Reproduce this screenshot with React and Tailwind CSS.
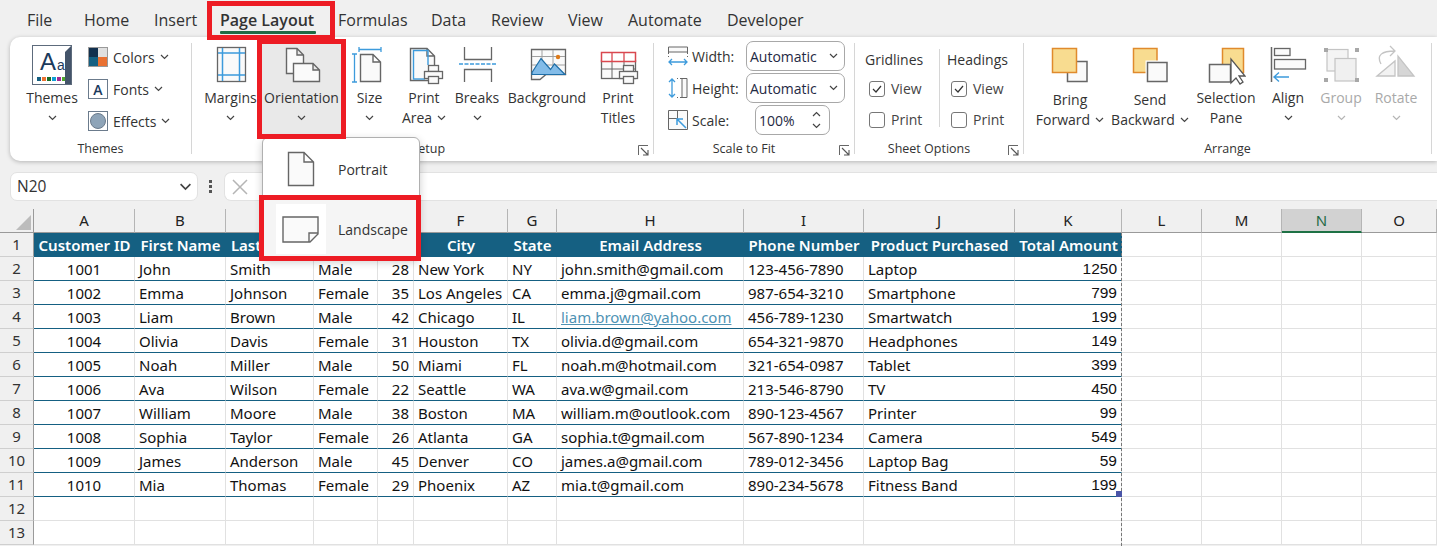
import React from 'react';

const UI = { fontFamily: '"Open Sans", "Noto Sans", sans-serif' };

const Chev = ({ c = '#444', className = '' }) => (
  <svg width="9" height="6" viewBox="0 0 9 6" className={className}>
    <path d="M1 1l3.5 3.5L8 1" fill="none" stroke={c} strokeWidth="1.2" />
  </svg>
);

const Launcher = () => (
  <svg width="11" height="11" viewBox="0 0 11 11" className="shrink-0">
    <path d="M.5 10V.5H10" fill="none" stroke="#666" />
    <path d="M3 3l6.5 6.5M5 10h5V5" fill="none" stroke="#555" strokeWidth="1.1" />
  </svg>
);

const G = '#666';
const B = '#3d9bdc';

const Page = ({ x, y, w, h, f = 6, c = G }) => (
  <path
    d={`M${x + .5} ${y + .5}H${x + w - f}L${x + w - .5} ${y + f}V${y + h - .5}H${x + .5}ZM${x + w - f} ${y + .5}V${y + f}H${x + w - .5}`}
    fill="#fafafa"
    stroke={c}
    strokeWidth="1.4"
    strokeLinejoin="miter"
  />
);

const Printer = ({ x, y }) => (
  <g fill="#fafafa" stroke={G} strokeWidth="1.3">
    <rect x={x + 4.5} y={y + .5} width="10" height="6" />
    <rect x={x + .5} y={y + 6.5} width="18" height="7" />
    <rect x={x + 4.5} y={y + 11.5} width="10" height="7" />
  </g>
);

const Icons = {
  margins: (
    <svg width="40" height="40" viewBox="0 0 40 40">
      <rect x="6.500" y="2.500" width="28" height="34" fill="#fafafa" stroke={G} strokeWidth="1.3" />
      <path d="M11.500 3v33M28.500 3v33M7 8h27M7 30h27" stroke={B} strokeWidth="1.5" />
    </svg>
  ),
  orientation: (
    <svg width="40" height="40" viewBox="0 0 40 40">
      <Page x={4} y={3} w={18} h={26} f={7} />
      <Page x={11} y={18} w={27} h={19} f={7} />
    </svg>
  ),
  size: (
    <svg width="40" height="40" viewBox="0 0 40 40">
      <path d="M9 4.500h22M9 2v5M31 2v5M4.500 9v28M2 9h5M2 37h5" stroke={B} strokeWidth="1.3" fill="none" />
      <Page x={10} y={9} w={21} h={28} f={8} />
    </svg>
  ),
  printArea: (
    <svg width="40" height="40" viewBox="0 0 40 40">
      <Page x={6} y={3} w={25} h={33} f={8} />
      <path d="M9.500 34V5.500H24V20" fill="none" stroke={B} strokeWidth="1.4" />
      <path d="M9 34h12" stroke={B} strokeWidth="1.4" />
      <Printer x={20} y={20} />
    </svg>
  ),
  breaks: (
    <svg width="40" height="40" viewBox="0 0 40 40">
      <path d="M7.500 2v12.500h27V2M7.500 37V24.500h27V37" fill="none" stroke={G} strokeWidth="1.3" />
      <path d="M2 19h37" stroke={B} strokeWidth="1.4" strokeDasharray="4 1.500" />
    </svg>
  ),
  background: (
    <svg width="40" height="40" viewBox="0 0 40 40">
      <path d="M4.500 4.500h34v25H19l-6 5H4.500z" fill="#fafafa" stroke={G} strokeWidth="1.300" />
      <path d="M5 11.500h33M15 5v24M26 5v24M5 20h33" stroke="#a0a0a0" />
      <path d="M5 27.500l9-14 9.500 11 4-5.500 10.500 10.500H5z" fill="#83bce8" stroke="#1f6fa8" strokeWidth="1.2" />
      <circle cx="31" cy="12" r="2.200" fill="#dd7a1a" />
    </svg>
  ),
  printTitles: (
    <svg width="44" height="40" viewBox="0 0 44 40">
      <rect x="5.500" y="15.500" width="34" height="18" fill="#fafafa" stroke={G} strokeWidth="1.3" />
      <path d="M16 16v18M28 16v18M6 24h33" stroke={G} />
      <rect x="5.500" y="7.500" width="34" height="9" fill="#fff" stroke="#d9484f" strokeWidth="1.500" />
      <path d="M16 8v8M28 8v8" stroke="#d9484f" strokeWidth="1.300" />
      <Printer x={23} y={20} />
    </svg>
  ),
  bring: (
    <svg width="40" height="40" viewBox="0 0 40 40">
      <rect x="17.500" y="16.500" width="19.500" height="20" fill="#fafafa" stroke={G} strokeWidth="1.500" />
      <rect x="2.500" y="3.500" width="24" height="24" fill="#f8dc90" stroke="#e08a2c" strokeWidth="1.500" />
    </svg>
  ),
  send: (
    <svg width="40" height="40" viewBox="0 0 40 40">
      <rect x="3.500" y="3.500" width="23.500" height="24" fill="#f8dc90" stroke="#e08a2c" strokeWidth="1.500" />
      <rect x="17.500" y="17.500" width="19.500" height="19" fill="#fafafa" stroke="#fff" strokeWidth="4" />
      <rect x="17.500" y="17.500" width="19.500" height="19" fill="#fafafa" stroke={G} strokeWidth="1.500" />
    </svg>
  ),
  selection: (
    <svg width="40" height="40" viewBox="0 0 40 40">
      <rect x="16.500" y="3.500" width="21" height="24" fill="#f8dc90" stroke="#e08a2c" strokeWidth="1.500" />
      <rect x="3.500" y="19.500" width="21" height="17.500" fill="#fafafa" stroke={G} strokeWidth="1.500" />
      <path d="M25 14v24l5-5 4 6 3-2-4-6h6z" fill="#fff" stroke="#555" strokeWidth="1.300" />
    </svg>
  ),
  align: (
    <svg width="40" height="40" viewBox="0 0 40 40">
      <path d="M3.500 2v35" stroke={G} strokeWidth="1.500" />
      <rect x="6.500" y="3.500" width="15.500" height="7" fill="#fafafa" stroke={G} strokeWidth="1.300" />
      <rect x="6.500" y="14.500" width="31" height="9.500" fill="#fafafa" stroke={G} strokeWidth="1.300" />
      <path d="M6 32h15M11 27.500L6 32l5 4.500" fill="none" stroke={B} strokeWidth="1.400" />
    </svg>
  ),
  group: (
    <svg width="40" height="40" viewBox="0 0 40 40">
      <rect x="6" y="4.500" width="21" height="21.500" fill="#f4f4f4" stroke="#c4c4c4" strokeWidth="1.200" />
      <rect x="14" y="13.500" width="21" height="22.500" fill="#f0f0f0" stroke="#c4c4c4" strokeWidth="1.200" />
      <path d="M3 3h4v4H3zM34 3h4v4h-4zM3 33h4v4H3zM34 33h4v4h-4z" fill="#a8a8a8" />
    </svg>
  ),
  rotate: (
    <svg width="44" height="40" viewBox="0 0 44 40">
      <path d="M7 19C2 10 8 6 21 6M16 1l5 5-5 5" fill="none" stroke="#c4c4c4" strokeWidth="1.300" />
      <path d="M3 31l18-15v15z" fill="#f2f2f2" stroke="#c4c4c4" strokeWidth="1.300" />
      <path d="M24 31V11l16 20z" fill="#d6d6d6" stroke="#c4c4c4" strokeWidth="1.300" />
    </svg>
  ),
};

const Big = ({ w, icon, l1, l2, chev, dim, hot, top = 'mt-[3px]' }) => (
  <div className={`flex h-[96px] shrink-0 flex-col items-center text-[14px] leading-[20px] ${w} ${hot ? 'bg-[#e9e9e9]' : ''} ${dim ? 'text-[#a9a9a9]' : 'text-[#333]'}`}>
    <div className="mt-[5px] flex h-[40px] items-center justify-center">{icon}</div>
    <div className={`${top} whitespace-nowrap`}>{l1}</div>
    {l2 ? (
      <div className="flex items-center gap-[5px] whitespace-nowrap">
        {l2}
        {chev && <Chev />}
      </div>
    ) : (
      <div className="flex h-[20px] items-center"><Chev c={dim ? '#b5b5b5' : '#444'} /></div>
    )}
  </div>
);

const SmallRow = ({ icon, label }) => (
  <div className="flex h-[32px] items-center gap-[5px] text-[14px] text-[#333]">
    {icon}
    <span>{label}</span>
    <Chev />
  </div>
);

const Sep = () => <div className="mt-[6px] h-[111px] w-px shrink-0 bg-[#d6d6d6]" />;

const GroupLabel = ({ children, launcher }) => (
  <div className={`relative flex h-[20px] items-center justify-center text-[12.500px] text-[#333] ${launcher ? 'pr-[20px]' : ''}`}>
    {children}
    {launcher && <span className="absolute right-[4px] top-[6px] flex"><Launcher /></span>}
  </div>
);

const Select = ({ w = 'w-[99px]', children }) => (
  <div className={`flex h-[30px] items-center justify-between rounded-[7px] border border-[#a8a8a8] pl-[3px] pr-[6px] text-[14px] text-[#1f2a44] ${w}`}>
    {children}
  </div>
);

const Check = ({ on, label }) => (
  <div className="flex h-[31px] items-center gap-[6px] pl-[4px] text-[14px] text-[#444]">
    <span className="flex h-[16px] w-[16px] items-center justify-center rounded-[3px] border border-[#777]">
      {on && (
        <svg width="10" height="8" viewBox="0 0 10 8"><path d="M1 4l3 3 5-6" fill="none" stroke="#333" strokeWidth="1.200" /></svg>
      )}
    </span>
    {label}
  </div>
);

function Ribbon() {
  return (
    <div className="ml-[10px] flex h-[124px] items-start rounded-l-[10px] bg-white shadow-[0_1px_4px_rgba(0,0,0,0.25)]" style={UI}>
      {/* Themes */}
      <div className="flex w-[181px] shrink-0 flex-col">
        <div className="flex h-[102px] pt-[8px]">
          <div className="flex w-[84px] flex-col items-center text-[14px] leading-[20px] text-[#333]">
            <div className="relative h-[40px] w-[40px] border border-[#5d6b7c] p-[1px]">
              <div className="flex h-full w-full flex-col bg-white pl-[3px]">
                <div className="flex h-[28px] items-end pl-[3px] text-[#1b3a5c]" style={{ fontFamily: '"Liberation Sans", sans-serif' }}>
                  <span className="text-[24px] leading-[26px]">A</span>
                  <span className="ml-[1px] text-[14px] leading-[20px]">a</span>
                </div>
                <div className="mt-[2px] flex gap-[1px]">
                  {['#156082', '#e97132', '#196b24', '#0f9ed5', '#a02b93', '#4ea72e'].map((c) => (
                    <span key={c} className="h-[4px] w-[4px]" style={{ background: c }} />
                  ))}
                </div>
              </div>
              <div className="absolute right-0 top-0 h-full w-[6px] bg-[#44546a]" />
              <div className="absolute right-0 top-0 h-0 w-0 border-b-[6px] border-l-[6px] border-b-transparent border-l-white" />
            </div>
            <div className="mt-[3px]">Themes</div>
            <div className="flex h-[20px] items-center"><Chev /></div>
          </div>
          <div className="-ml-[6px] -mt-[4px] flex flex-col">
            <SmallRow
              label="Colors"
              icon={
                <span className="grid h-[20px] w-[20px] grid-cols-2 border border-[#999]">
                  <span className="bg-[#12304e]" /><span className="bg-[#e0e0e0]" />
                  <span className="bg-[#156082]" /><span className="bg-[#e97132]" />
                </span>
              }
            />
            <SmallRow
              label="Fonts"
              icon={
                <span className="flex h-[20px] w-[20px] items-center justify-center border border-[#6b7b8c] text-[14px] font-semibold text-[#1b3a5c]">A</span>
              }
            />
            <SmallRow
              label="Effects"
              icon={
                <span className="flex h-[20px] w-[20px] items-center justify-center border border-[#6b7b8c]">
                  <span className="h-[16px] w-[16px] rounded-full border border-[#6b7b8c] bg-[#8ea4b8]" />
                </span>
              }
            />
          </div>
        </div>
        <GroupLabel>Themes</GroupLabel>
      </div>
      <Sep />
      {/* Page Setup */}
      <div className="flex w-[461px] shrink-0 flex-col">
        <div className="flex h-[102px] pl-[8px] pt-[3px]">
          <Big w="w-[61px]" icon={Icons.margins} l1="Margins" />
          <Big w="w-[81px]" icon={Icons.orientation} l1="Orientation" hot />
          <Big w="w-[55px]" icon={Icons.size} l1="Size" />
          <Big w="w-[54px]" icon={Icons.printArea} l1="Print" l2="Area" chev />
          <Big w="w-[52px]" icon={Icons.breaks} l1="Breaks" />
          <Big w="w-[88px]" icon={Icons.background} l1="Background" l2=" " />
          <Big w="w-[54px]" icon={Icons.printTitles} l1="Print" l2="Titles" />
        </div>
        <GroupLabel launcher>Page Setup</GroupLabel>
      </div>
      <Sep />
      {/* Scale to Fit */}
      <div className="flex w-[200px] shrink-0 flex-col">
        <div className="flex h-[102px] flex-col gap-[2px] pl-[14px] pt-[4px]">
          <div className="flex items-center gap-[4px] text-[14px] text-[#333]">
            <svg width="20" height="20" viewBox="0 0 20 20">
              <path d="M.5 1h19v5H.5z" fill="#fafafa" stroke={G} />
              <path d="M.5 6v5M19.500 6v5" stroke={G} strokeDasharray="2 2" />
              <path d="M1 16h18M4 13l-3 3 3 3M16 13l3 3-3 3" fill="none" stroke={B} strokeWidth="1.300" />
            </svg>
            <span className="w-[50px]">Width:</span>
            <Select>Automatic<Chev /></Select>
          </div>
          <div className="flex items-center gap-[4px] text-[14px] text-[#333]">
            <svg width="20" height="20" viewBox="0 0 20 20">
              <path d="M14 .5h5v19h-5z" fill="#fafafa" stroke={G} />
              <path d="M14 .5H9M14 19.500H9" stroke={G} strokeDasharray="2 2" />
              <path d="M4 1v18M1 4l3-3 3 3M1 16l3 3 3-3" fill="none" stroke={B} strokeWidth="1.300" />
            </svg>
            <span className="w-[50px]">Height:</span>
            <Select>Automatic<Chev /></Select>
          </div>
          <div className="flex items-center gap-[4px] text-[14px] text-[#333]">
            <svg width="20" height="20" viewBox="0 0 20 20">
              <path d="M.5.5h19v19H.5z" fill="#fafafa" stroke={G} />
              <path d="M.5 8.500h9v-8" fill="none" stroke={G} />
              <path d="M18 18L9 9M9 15V9h6" fill="none" stroke={B} strokeWidth="1.500" />
            </svg>
            <span className="w-[59px]">Scale:</span>
            <div className="flex h-[30px] w-[75px] items-center justify-between rounded-[7px] border border-[#a8a8a8] pl-[3px] pr-[8px] text-[14px] text-[#1f2a44]">
              100%
              <span className="flex flex-col gap-[6px]">
                <Chev className="rotate-180" />
                <Chev />
              </span>
            </div>
          </div>
        </div>
        <GroupLabel launcher>Scale to Fit</GroupLabel>
      </div>
      <Sep />
      {/* Sheet Options */}
      <div className="flex w-[168px] shrink-0 flex-col">
        <div className="flex h-[102px] pl-[10px] pt-[12px]">
          <div className="w-[74px]">
            <div className="mb-[3px] h-[21px] text-[14px] text-[#333]">Gridlines</div>
            <Check on label="View" />
            <Check label="Print" />
          </div>
          <div className="h-[78px] w-px bg-[#d6d6d6]" />
          <div className="pl-[7px]">
            <div className="mb-[3px] h-[21px] text-[14px] text-[#333]">Headings</div>
            <Check on label="View" />
            <Check label="Print" />
          </div>
        </div>
        <GroupLabel launcher>Sheet Options</GroupLabel>
      </div>
      <Sep />
      {/* Arrange */}
      <div className="flex w-[407px] shrink-0 flex-col">
        <div className="flex h-[102px] pl-[6px] pt-[3px]">
          <Big w="w-[80px]" icon={Icons.bring} l1="Bring" l2="Forward" chev top="mt-[5px]" />
          <Big w="w-[80px]" icon={Icons.send} l1="Send" l2="Backward" chev top="mt-[5px]" />
          <Big w="w-[72px]" icon={Icons.selection} l1="Selection" l2="Pane" />
          <Big w="w-[52px]" icon={Icons.align} l1="Align" />
          <Big w="w-[54px]" icon={Icons.group} l1="Group" dim />
          <Big w="w-[56px]" icon={Icons.rotate} l1="Rotate" dim />
        </div>
        <GroupLabel>Arrange</GroupLabel>
      </div>
      <Sep />
    </div>
  );
}

const TABS = [
  ['File', 'w-[57px]'], ['Home', 'w-[70px]'], ['Insert', 'w-[66px]'], ['Page Layout', 'w-[118px]'],
  ['Formulas', 'w-[93px]'], ['Data', 'w-[60px]'], ['Review', 'w-[77px]'], ['View', 'w-[60px]'],
  ['Automate', 'w-[99px]'], ['Developer', 'w-[100px]'],
];

const COLS = [
  ['A', 101], ['B', 91], ['C', 88], ['D', 64], ['E', 36], ['F', 94], ['G', 49], ['H', 187],
  ['I', 120], ['J', 151], ['K', 107], ['L', 80], ['M', 80], ['N', 80], ['O', 75],
];

const HEAD = ['Customer ID', 'First Name', 'Last Name', 'Gender', 'Age', 'City', 'State', 'Email Address', 'Phone Number', 'Product Purchased', 'Total Amount'];

const DATA = [
  ['1001', 'John', 'Smith', 'Male', '28', 'New York', 'NY', 'john.smith@gmail.com', '123-456-7890', 'Laptop', '1250'],
  ['1002', 'Emma', 'Johnson', 'Female', '35', 'Los Angeles', 'CA', 'emma.j@gmail.com', '987-654-3210', 'Smartphone', '799'],
  ['1003', 'Liam', 'Brown', 'Male', '42', 'Chicago', 'IL', 'liam.brown@yahoo.com', '456-789-1230', 'Smartwatch', '199'],
  ['1004', 'Olivia', 'Davis', 'Female', '31', 'Houston', 'TX', 'olivia.d@gmail.com', '654-321-9870', 'Headphones', '149'],
  ['1005', 'Noah', 'Miller', 'Male', '50', 'Miami', 'FL', 'noah.m@hotmail.com', '321-654-0987', 'Tablet', '399'],
  ['1006', 'Ava', 'Wilson', 'Female', '22', 'Seattle', 'WA', 'ava.w@gmail.com', '213-546-8790', 'TV', '450'],
  ['1007', 'William', 'Moore', 'Male', '38', 'Boston', 'MA', 'william.m@outlook.com', '890-123-4567', 'Printer', '99'],
  ['1008', 'Sophia', 'Taylor', 'Female', '26', 'Atlanta', 'GA', 'sophia.t@gmail.com', '567-890-1234', 'Camera', '549'],
  ['1009', 'James', 'Anderson', 'Male', '45', 'Denver', 'CO', 'james.a@gmail.com', '789-012-3456', 'Laptop Bag', '59'],
  ['1010', 'Mia', 'Thomas', 'Female', '29', 'Phoenix', 'AZ', 'mia.t@gmail.com', '890-234-5678', 'Fitness Band', '199'],
];

const CELL = { fontFamily: '"Noto Sans", "Open Sans", sans-serif' };
const ARIAL = { fontFamily: '"Liberation Sans", sans-serif', fontSize: 15.5 };

function Sheet() {
  const rows = [];
  for (let i = 1; i <= 13; i++) {
    const cells = [];
    COLS.forEach(([name, w], c) => {
      let cls = 'border-r border-b border-[#e1e1e1] bg-white';
      let text = '';
      if (i === 1 && c < 11) {
        cls = 'bg-[#156082] text-white font-semibold justify-center';
        text = HEAD[c];
      } else if (i >= 2 && i <= 11 && c < 11) {
        text = DATA[i - 2][c];
        const link = c === 7 && i === 4;
        cls = `bg-white pt-px border-r border-b border-r-[#e1e1e1] border-b-[#156082] ${link ? 'text-[#4f93b4] underline' : 'text-[#111]'}`;
        if (c === 0) cls += ' justify-center';
        if (c === 4 || c === 10) cls += ' justify-end';
      }
      cells.push(
        <div
          key={name}
          className={`relative flex h-[24px] shrink-0 items-center whitespace-nowrap px-[4px] ${cls}`}
          style={c === 10 && i > 1 && i <= 11 ? { width: w, ...ARIAL } : { width: w }}
        >
          {text}
          {c === 10 && i === 11 && (
            <span className="absolute -bottom-[1px] -right-[1px] z-10 h-[6px] w-[6px] bg-[#4a55a8]" />
          )}
        </div>
      );
    });
    rows.push(
      <div key={i} className="flex">
        <div className="flex h-[24px] w-[34px] shrink-0 items-center justify-center border-b border-r border-b-[#cfcfcf] border-r-[#9a9a9a] bg-[#f0f0f0] text-[#333]">
          {i}
        </div>
        {cells}
      </div>
    );
  }
  return (
    <div className="text-[15px]" style={CELL}>
      <div className="flex h-[24px] bg-[#f0f0f0]">
        <div className="flex h-[24px] w-[34px] shrink-0 items-end justify-end border-b border-r border-[#9a9a9a] p-[2px]">
          <span className="h-0 w-0 border-b-[15px] border-l-[15px] border-b-[#bcbcbc] border-l-transparent" />
        </div>
        {COLS.map(([name, w]) => (
          <div
            key={name}
            className={`flex h-[24px] shrink-0 items-center justify-center border-r border-r-[#b5b5b5] ${
              name === 'N' ? 'border-b-2 border-b-[#1e7145] bg-[#d2d2d2] text-[#1e6b45]' : 'border-b border-b-[#9a9a9a] text-[#222]'
            }`}
            style={{ width: w }}
          >
            {name}
          </div>
        ))}
      </div>
      {rows}
    </div>
  );
}

export default function App() {
  return (
    <div className="relative h-[546px] w-[1437px] overflow-hidden bg-[#f0f0f0]">
      <div className="flex h-[37px] items-start pl-[27px] pt-[8px] text-[16px] leading-[24px] text-[#333]" style={UI}>
        {TABS.map(([t, w]) => (
          <div key={t} className={`${w} shrink-0 whitespace-nowrap ${t === 'Page Layout' ? 'font-semibold' : ''}`}>{t}</div>
        ))}
      </div>
      <Ribbon />
      {/* formula bar */}
      <div className="flex h-[48px] items-start pl-[10px] pt-[11px]" style={UI}>
        <div className="flex h-[29px] w-[188px] items-center justify-between rounded-[7px] border border-[#e2e2e2] bg-white pl-[6px] pr-[7px] text-[15.500px] text-[#333]">
          N20
          <Chev c="#444" className="scale-[1.400]" />
        </div>
        <div className="ml-[10px] flex h-[29px] w-[5px] flex-col items-center justify-center gap-[2px]">
          <span className="h-[3px] w-[3px] bg-[#555]" /><span className="h-[3px] w-[3px] bg-[#555]" /><span className="h-[3px] w-[3px] bg-[#555]" />
        </div>
        <div className="ml-[11px] flex h-[29px] flex-1 items-center rounded-l-[7px] border border-r-0 border-[#e2e2e2] bg-white pl-[7px]">
          <svg width="16" height="16" viewBox="0 0 16 16"><path d="M1 1l14 14M15 1L1 15" stroke="#b5b5b5" strokeWidth="1.500" /></svg>
        </div>
      </div>
      <Sheet />

      {/* print area edge */}
      <div className="absolute bottom-0 left-[1121px] top-[233px] border-l border-dashed border-[#777]" />

      {/* green underline of the active tab */}
      <div className="absolute left-[220px] top-[31px] h-[3px] w-[96px] rounded-[1px] bg-[#1e6b45]" />

      {/* orientation dropdown */}
      <div className="absolute left-[262px] top-[137px] w-[158px] rounded-[6px] border border-[#b0b0b0] bg-white text-[14px] text-[#333] shadow-[0_3px_8px_rgba(0,0,0,0.2)]" style={UI}>
        <div className="flex h-[62px] items-center">
          <div className="flex w-[75px] justify-center">
            <svg width="30" height="38" viewBox="0 0 30 38"><Page x={2} y={2} w={26} h={34} f={10} /></svg>
          </div>
          Portrait
        </div>
        <div className="flex h-[58px] items-center bg-[#f5f5f5]">
          <div className="ml-[13px] mr-[12px] flex h-[50px] w-[50px] items-center justify-center bg-white">
            <svg width="38" height="27" viewBox="0 0 38 27">
              <path d="M1 1h35v17l-8 8H1z" fill="#fafafa" stroke={G} strokeWidth="1.400" />
              <path d="M36 17h-9v9" fill="none" stroke={G} strokeWidth="1.400" />
            </svg>
          </div>
          Landscape
        </div>
      </div>

      {/* red annotation boxes */}
      <div className="absolute left-[207px] top-[1px] h-[39px] w-[128px] border-[5px] border-[#ed1c24]" />
      <div className="absolute left-[257px] top-[39px] h-[100px] w-[89px] border-[5px] border-[#ed1c24]" />
      <div className="absolute left-[259px] top-[195px] h-[66px] w-[162px] border-[5px] border-[#ed1c24]" />
    </div>
  );
}
